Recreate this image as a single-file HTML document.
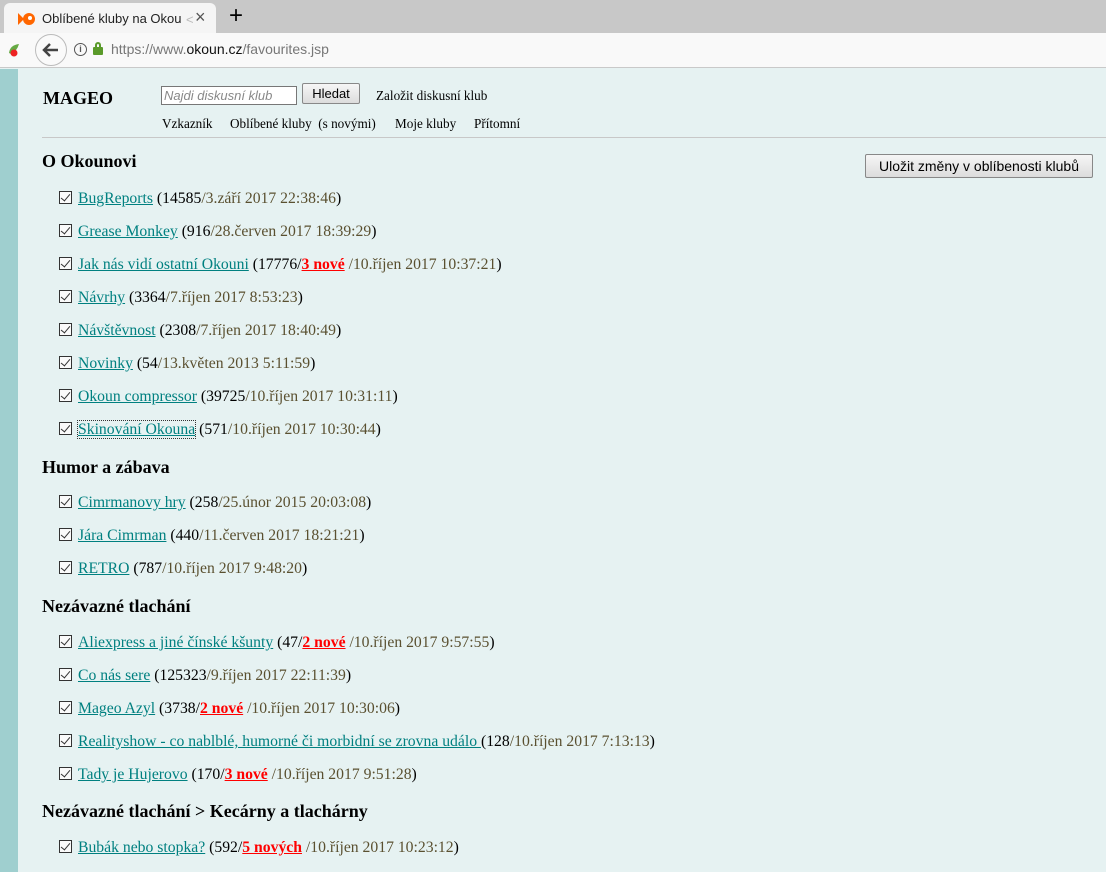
<!DOCTYPE html>
<html><head><meta charset="utf-8"><style>
*{margin:0;padding:0;box-sizing:border-box}
body{width:1106px;height:872px;overflow:hidden;background:#e6f2f2;font-family:"Liberation Serif",serif;font-size:15.7px;position:relative}
.tabbar{position:absolute;left:0;top:0;width:1106px;height:33px;background:#c8c8c8}
.tab{position:absolute;left:4px;top:3px;width:212px;height:31px;background:#f5f5f5;border-radius:6px 6px 0 0;font-family:"Liberation Sans",sans-serif;font-size:13px;color:#222;overflow:hidden}
.addr{position:absolute;left:0;top:33px;width:1106px;height:35px;background:#f9f9f9;border-bottom:1px solid #c9c9c9}
.url{position:absolute;left:111px;top:8px;font-family:"Liberation Sans",sans-serif;font-size:14px;color:#777}
.stripe{position:absolute;left:0;top:69px;width:18px;height:803px;background:#9fcfcf}
.a{position:absolute;white-space:nowrap}
.row{position:absolute;left:59px;white-space:nowrap;line-height:18px}
.cb{display:inline-block;width:13px;height:13px;border:1px solid #333;vertical-align:-1px;margin-right:6px;position:relative;background:#fafafa}
.cb:after{content:"";position:absolute;left:3px;top:0px;width:4px;height:8px;border:solid #333;border-width:0 1.5px 1.5px 0;transform:rotate(40deg)}
a{color:#008080;text-decoration:underline}
.d{color:#5a5030}
.n{color:#f00;font-weight:bold;text-decoration:underline}
h2{position:absolute;left:42px;font-size:18px;font-weight:bold;line-height:20px;white-space:nowrap}
.btn{position:absolute;font-family:"Liberation Sans",sans-serif;font-size:13px;border:1px solid #888;border-radius:2px;background:linear-gradient(#f6f6f6,#dcdcdc);text-align:center}
.s{font-size:13.2px}
</style></head><body>
<div class="tabbar"></div>
<div class="tab"><svg style="position:absolute;left:14px;top:8px" width="18" height="16"><circle cx="11" cy="8" r="6" fill="#f60"/><circle cx="12" cy="7" r="2" fill="#fff"/><path d="M0 2 L6 8 L0 14 Z" fill="#f60"/></svg><span style="position:absolute;left:38px;top:8px;width:140px;overflow:hidden;white-space:nowrap">Oblíbené kluby na Okounu</span><span style="position:absolute;left:182px;top:9px;color:#bbb">&lt;</span><span style="position:absolute;left:191px;top:4px;font-size:18px;color:#555">×</span></div>
<div class="a" style="left:229px;top:2px;font-size:24px;font-family:'Liberation Sans',sans-serif">+</div>
<div class="addr">
<svg style="position:absolute;left:7px;top:10px" width="14" height="14"><path d="M2 10 Q3 2 12 1 Q10 8 4 11Z" fill="#6a4"/><circle cx="7" cy="10" r="3.5" fill="#e22"/></svg>
<div style="position:absolute;left:35px;top:1px;width:32px;height:32px;border:1px solid #bbb;border-radius:50%;background:#fafafa"><svg width="30" height="30"><path d="M22 15H9M14 9l-6 6 6 6" stroke="#444" stroke-width="2.5" fill="none"/></svg></div>
<div style="position:absolute;left:74px;top:10px;width:13px;height:13px;border:1px solid #555;border-radius:50%;font:bold 9px 'Liberation Sans';text-align:center;line-height:11px;color:#555">i</div>
<div style="position:absolute;left:93px;top:14px;width:10px;height:8px;background:#5a9a2a;border-radius:1px"></div>
<div style="position:absolute;left:95px;top:9px;width:6px;height:7px;border:2px solid #5a9a2a;border-bottom:none;border-radius:3px 3px 0 0"></div>
<div class="url">https://www.<span style="color:#111">okoun.cz</span>/favourites.jsp</div>
</div>
<div class="stripe"></div>
<div class="a" style="left:43px;top:88px;font-size:18px;font-weight:bold">MAGEO</div>
<div class="a" style="left:161px;top:86px;width:136px;height:19px;border:1px solid #777;background:#fff;font:italic 13px 'Liberation Sans',sans-serif;color:#888;padding:1px 2px">Najdi diskusní klub</div>
<div class="btn" style="left:302px;top:83px;width:58px;height:21px;line-height:19px">Hledat</div>
<div class="a s" style="left:376px;top:88px">Založit diskusní klub</div>
<div class="a s" style="left:162px;top:116px">Vzkazník</div>
<div class="a s" style="left:230px;top:116px">Oblíbené kluby&nbsp; (s novými)</div>
<div class="a s" style="left:395px;top:116px">Moje kluby</div>
<div class="a s" style="left:474px;top:116px">Přítomní</div>
<div class="a" style="left:42px;top:137px;width:1064px;height:1px;background:#c8c8c8"></div>
<div class="btn" style="left:865px;top:154px;width:228px;height:24px;line-height:22px;font-size:14px">Uložit změny v oblíbenosti klubů</div>

<h2 style="top:151px">O Okounovi</h2>
<div class="row" style="top:190px"><span class="cb"></span><a>BugReports</a> (14585<span class="d">/3.září 2017 22:38:46</span>)</div>
<div class="row" style="top:223px"><span class="cb"></span><a>Grease Monkey</a> (916<span class="d">/28.červen 2017 18:39:29</span>)</div>
<div class="row" style="top:256px"><span class="cb"></span><a>Jak nás vidí ostatní Okouni</a> (17776/<span class="n">3 nové</span> <span class="d">/10.říjen 2017 10:37:21</span>)</div>
<div class="row" style="top:289px"><span class="cb"></span><a>Návrhy</a> (3364<span class="d">/7.říjen 2017 8:53:23</span>)</div>
<div class="row" style="top:322px"><span class="cb"></span><a>Návštěvnost</a> (2308<span class="d">/7.říjen 2017 18:40:49</span>)</div>
<div class="row" style="top:355px"><span class="cb"></span><a>Novinky</a> (54<span class="d">/13.květen 2013 5:11:59</span>)</div>
<div class="row" style="top:388px"><span class="cb"></span><a>Okoun compressor</a> (39725<span class="d">/10.říjen 2017 10:31:11</span>)</div>
<div class="row" style="top:421px"><span class="cb"></span><a style="outline:1px dotted #333">Skinování Okouna</a> (571<span class="d">/10.říjen 2017 10:30:44</span>)</div>

<h2 style="top:457px">Humor a zábava</h2>
<div class="row" style="top:494px"><span class="cb"></span><a>Cimrmanovy hry</a> (258<span class="d">/25.únor 2015 20:03:08</span>)</div>
<div class="row" style="top:527px"><span class="cb"></span><a>Jára Cimrman</a> (440<span class="d">/11.červen 2017 18:21:21</span>)</div>
<div class="row" style="top:560px"><span class="cb"></span><a>RETRO</a> (787<span class="d">/10.říjen 2017 9:48:20</span>)</div>

<h2 style="top:596px">Nezávazné tlachání</h2>
<div class="row" style="top:634px"><span class="cb"></span><a>Aliexpress a jiné čínské kšunty</a> (47/<span class="n">2 nové</span> <span class="d">/10.říjen 2017 9:57:55</span>)</div>
<div class="row" style="top:667px"><span class="cb"></span><a>Co nás sere</a> (125323<span class="d">/9.říjen 2017 22:11:39</span>)</div>
<div class="row" style="top:700px"><span class="cb"></span><a>Mageo Azyl</a> (3738/<span class="n">2 nové</span> <span class="d">/10.říjen 2017 10:30:06</span>)</div>
<div class="row" style="top:733px"><span class="cb"></span><a>Realityshow - co nablblé, humorné či morbidní se zrovna událo </a> (128<span class="d">/10.říjen 2017 7:13:13</span>)</div>
<div class="row" style="top:766px"><span class="cb"></span><a>Tady je Hujerovo</a> (170/<span class="n">3 nové</span> <span class="d">/10.říjen 2017 9:51:28</span>)</div>

<h2 style="top:801px">Nezávazné tlachání &gt; Kecárny a tlachárny</h2>
<div class="row" style="top:839px"><span class="cb"></span><a>Bubák nebo stopka?</a> (592/<span class="n">5 nových</span> <span class="d">/10.říjen 2017 10:23:12</span>)</div>
</body></html>
